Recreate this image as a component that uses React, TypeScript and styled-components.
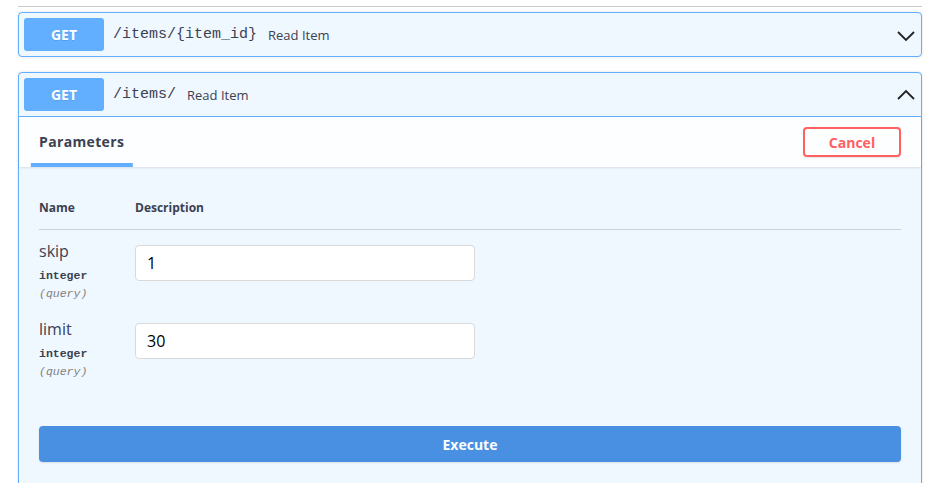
import React from 'react';
import styled, { createGlobalStyle } from 'styled-components';

const GlobalStyle = createGlobalStyle`
  html, body {
    margin: 0;
    padding: 0;
    background: #fff;
  }
  body {
    font-family: 'Open Sans', 'Noto Sans', sans-serif;
    color: #3b4151;
    overflow: hidden;
  }
`;

const Page = styled.div`
  width: 904px;
  padding-left: 18px;
`;

const TagLine = styled.div`
  height: 6px;
  border-bottom: 1px solid #c9cacd;
  margin-bottom: 5px;
`;

const OpBlock = styled.div<{ $gap?: number }>`
  margin-bottom: ${p => p.$gap ?? 0}px;
  border: 1px solid #61affe;
  border-radius: 4px;
  background: #eff7ff;
  box-shadow: 0 0 3px rgba(0, 0, 0, 0.12);
`;

const Summary = styled.div<{ $open?: boolean }>`
  display: flex;
  align-items: center;
  padding: 5px;
  height: 33px;
  border-bottom: ${p => (p.$open ? '1px solid #61affe' : 'none')};
`;

const Method = styled.span`
  width: 80px;
  height: 33px;
  display: flex;
  align-items: center;
  justify-content: center;
  border-radius: 3px;
  background: #61affe;
  color: #fff;
  font-size: 14px;
  font-weight: 700;
  text-shadow: 0 1px 0 rgba(0, 0, 0, 0.1);
`;

const Path = styled.span`
  font-family: 'Liberation Mono', 'DejaVu Sans Mono', monospace;
  font-size: 15px;
  color: #3b4151;
  padding: 0 11px 0 9px;
`;

const Desc = styled.span`
  font-size: 13px;
  color: #3b4151;
  flex: 1;
`;

const Arrow = styled.svg`
  width: 20px;
  height: 20px;
  fill: none;
  stroke: #222;
  stroke-width: 1.8;
`;

const SectionHeader = styled.div`
  display: flex;
  align-items: center;
  justify-content: space-between;
  height: 50px;
  padding: 0 20px;
  background: rgba(255, 255, 255, 0.8);
  box-shadow: 0 1px 2px rgba(0, 0, 0, 0.1);
`;

const Tab = styled.h4`
  position: relative;
  margin: 0;
  align-self: stretch;
  display: flex;
  align-items: center;
  padding-bottom: 2px;
  font-size: 14px;
  font-weight: 700;
  letter-spacing: 0.35px;
  color: #3b4151;

  &::after {
    content: '';
    position: absolute;
    bottom: 0;
    left: 50%;
    width: 120%;
    height: 4px;
    transform: translateX(-50%);
    background: #61affe;
  }
`;

const CancelButton = styled.button`
  width: 98px;
  height: 30px;
  border: 2px solid #ff6060;
  border-radius: 4px;
  background: transparent;
  color: #ff6060;
  font-family: inherit;
  font-size: 14px;
  font-weight: 700;
  box-shadow: 0 1px 2px rgba(0, 0, 0, 0.1);
`;

const SectionBody = styled.div`
  padding: 20px 20px 40px;
`;

const Table = styled.div`
  display: grid;
  grid-template-columns: 96px 340px 1fr;
`;

const HeadCell = styled.div`
  padding: 3px 0 12px;
  font-size: 12px;
  font-weight: 700;
  border-bottom: 1px solid rgba(59, 65, 81, 0.2);
  height: 18px;
  line-height: 18px;
  margin-top: 9px;
`;

const Cell = styled.div`
  padding-top: 15px;
  height: 63px;
`;

const ParamName = styled.div`
  font-size: 16px;
  line-height: 18px;
  color: #3b4151;
  margin-top: -3px;
`;

const ParamType = styled.div`
  font-family: 'Liberation Mono', 'DejaVu Sans Mono', monospace;
  font-size: 11.5px;
  font-weight: 700;
  line-height: 17px;
  margin-top: 7px;
`;

const ParamIn = styled.div`
  font-family: 'Liberation Mono', 'DejaVu Sans Mono', monospace;
  font-size: 11.5px;
  font-style: italic;
  color: #808080;
  line-height: 17px;
  margin-top: 1px;
`;

const Input = styled.input`
  box-sizing: border-box;
  width: 340px;
  height: 36px;
  padding: 0 11px;
  border: 1px solid #d9d9d9;
  border-radius: 4px;
  background: #fff;
  font-family: 'Open Sans', 'Noto Sans', sans-serif;
  font-size: 16px;
  color: #000;
  outline: none;
`;

const ExecuteButton = styled.button`
  display: block;
  width: 100%;
  height: 36px;
  margin-top: 40px;
  border: none;
  border-radius: 4px;
  background: #4990e2;
  color: #fff;
  font-family: inherit;
  font-size: 14px;
  font-weight: 700;
  box-shadow: 0 1px 2px rgba(0, 0, 0, 0.1);
`;

const params = [
  { name: 'skip', type: 'integer', loc: '(query)', value: '1' },
  { name: 'limit', type: 'integer', loc: '(query)', value: '30' },
];

const App: React.FC = () => {
  return (
    <Page>
      <GlobalStyle />
      <TagLine />
      <OpBlock $gap={15}>
        <Summary>
          <Method>GET</Method>
          <Path>/items/&#123;item_id&#125;</Path>
          <Desc>Read Item</Desc>
          <Arrow viewBox="0 0 20 20">
            <path d="M2 7 L10 15 L18 7" />
          </Arrow>
        </Summary>
      </OpBlock>
      <OpBlock>
        <Summary $open>
          <Method>GET</Method>
          <Path>/items/</Path>
          <Desc>Read Item</Desc>
          <Arrow viewBox="0 0 20 20">
            <path d="M2 14 L10 6 L18 14" />
          </Arrow>
        </Summary>
        <SectionHeader>
          <Tab>
            <span>Parameters</span>
          </Tab>
          <CancelButton>Cancel</CancelButton>
        </SectionHeader>
        <SectionBody>
          <Table>
            <HeadCell>Name</HeadCell>
            <HeadCell>Description</HeadCell>
            <HeadCell />
            {params.map(p => (
              <React.Fragment key={p.name}>
                <Cell>
                  <ParamName>{p.name}</ParamName>
                  <ParamType>{p.type}</ParamType>
                  <ParamIn>{p.loc}</ParamIn>
                </Cell>
                <Cell>
                  <Input defaultValue={p.value} />
                </Cell>
                <Cell />
              </React.Fragment>
            ))}
          </Table>
          <ExecuteButton>Execute</ExecuteButton>
        </SectionBody>
      </OpBlock>
    </Page>
  );
};

export default App;
